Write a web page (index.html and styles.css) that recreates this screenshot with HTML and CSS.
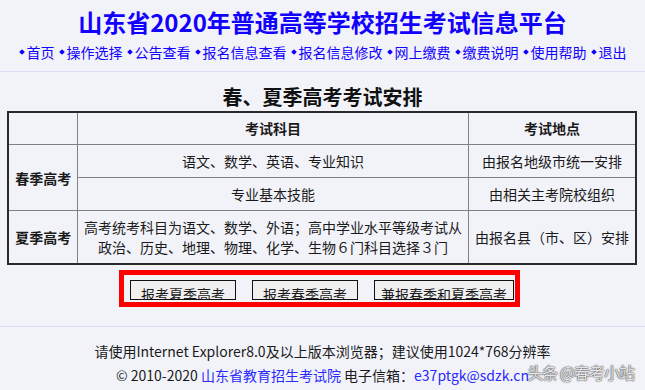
FILE: index.html
```html
<!DOCTYPE html>
<html lang="zh-CN">
<head>
    <meta charset="UTF-8">
    <meta name="viewport" content="width=device-width, initial-scale=1.0">
    <title>山东省2020年普通高等学校招生考试信息平台</title>
    <link rel="stylesheet" href="styles.css">
</head>
<body>
    <div id="header">
        <h1>山东省2020年普通高等学校招生考试信息平台</h1>
        <div id="nav">
            <a href="#">首页</a>
            <a href="#">操作选择</a>
            <a href="#">公告查看</a>
            <a href="#">报名信息查看</a>
            <a href="#">报名信息修改</a>
            <a href="#">网上缴费</a>
            <a href="#">缴费说明</a>
            <a href="#">使用帮助</a>
            <a href="#">退出</a>
        </div>
    </div>

    <div id="main">
        <h2>春、夏季高考考试安排</h2>
        <table class="plan">
            <colgroup>
                <col class="c-type">
                <col class="c-subject">
                <col class="c-place">
            </colgroup>
            <tr class="head">
                <th></th>
                <th>考试科目</th>
                <th>考试地点</th>
            </tr>
            <tr>
                <th rowspan="2">春季高考</th>
                <td>语文、数学、英语、专业知识</td>
                <td>由报名地级市统一安排</td>
            </tr>
            <tr>
                <td>专业基本技能</td>
                <td>由相关主考院校组织</td>
            </tr>
            <tr>
                <th>夏季高考</th>
                <td>高考统考科目为语文、数学、外语；高中学业水平等级考试从<br>政治、历史、地理、物理、化学、生物６门科目选择３门</td>
                <td>由报名县（市、区）安排</td>
            </tr>
        </table>

        <div id="choose">
            <button class="btn-1">报考夏季高考</button>
            <button class="btn-1">报考春季高考</button>
            <button class="btn-2">兼报春季和夏季高考</button>
        </div>
    </div>

    <div id="footer">
        <p>请使用Internet Explorer8.0及以上版本浏览器；建议使用1024*768分辨率</p>
        <p>© 2010-2020 <a href="#">山东省教育招生考试院</a> 电子信箱：<a href="#">e37ptgk@sdzk.cn</a></p>
        <span class="mark">头条 @春考小站</span>
    </div>
</body>
</html>
```

FILE: styles.css
```css
body {
    margin: 0;
    background-color: #f2f3f9;
    color: #1a1a1a;
    font-family: "Noto Sans CJK SC", "Liberation Sans", sans-serif;
    font-size: 14px;
}

#header {
    padding: 6px 0 9px;
    text-align: center;
    border-bottom: 1px solid #dcdcf8;
}

#header h1 {
    margin: 0;
    font-size: 24px;
    line-height: 32px;
    font-weight: bold;
    color: #1200ff;
}

#nav {
    margin-top: 4px;
    display: flex;
    justify-content: center;
    gap: 4px;
    line-height: 20px;
}

#nav a {
    color: #1200ff;
    text-decoration: none;
    display: flex;
    align-items: center;
}

#nav a::before {
    content: "";
    width: 4px;
    height: 4px;
    background-color: #1200ff;
    transform: rotate(45deg);
    margin: 0 3px 0 1px;
}

#main {
    padding-top: 11px;
}

#main h2 {
    margin: 0;
    font-size: 20px;
    line-height: 28px;
    text-align: center;
    color: #111;
}

.plan {
    margin-left: 7px;
    width: 630px;
    border-collapse: collapse;
    border: 2px solid #2a2a2a;
}

.plan col.c-type { width: 70px; }
.plan col.c-subject { width: 392px; }
.plan col.c-place { width: 168px; }

.plan th, .plan td {
    border: 1px solid #808080;
    padding: 6px 2px;
    line-height: 20px;
    text-align: center;
    font-size: 14px;
    color: #1a1a1a;
}

.plan th {
    font-weight: bold;
}

.plan tr.head th {
    padding: 5px 2px 6px;
}

#choose {
    margin: 5px 0 0 119px;
    width: fit-content;
    display: flex;
    gap: 16px;
    border: 5px solid #ff0000;
    padding: 5px 1px 2px 6px;
}

#choose button {
    box-sizing: border-box;
    height: 20px;
    padding: 5px 0 0;
    border: 1px solid #111;
    background-color: #f0f0f0;
    color: #1a1a1a;
    font-family: inherit;
    font-size: 14px;
    line-height: 16px;
    overflow: hidden;
    cursor: pointer;
}

#choose .btn-1 { width: 106px; }
#choose .btn-2 { width: 140px; }

#footer {
    position: relative;
    margin-top: 19px;
    padding-top: 12px;
    border-top: 1px solid #dcdcf8;
    text-align: center;
}

#footer p {
    margin: 0;
    line-height: 24px;
}

#footer a {
    color: #2a2aff;
    text-decoration: none;
}

/* marca de agua del sitio que compartió la captura */
#footer .mark {
    position: absolute;
    right: 11px;
    top: 33px;
    font-size: 16px;
    line-height: 24px;
    letter-spacing: -1px;
    color: rgba(255, 255, 255, 0.85);
    text-shadow: 0 0 1px #555, 0 0 1px #555, 0 0 2px #777;
}
```
